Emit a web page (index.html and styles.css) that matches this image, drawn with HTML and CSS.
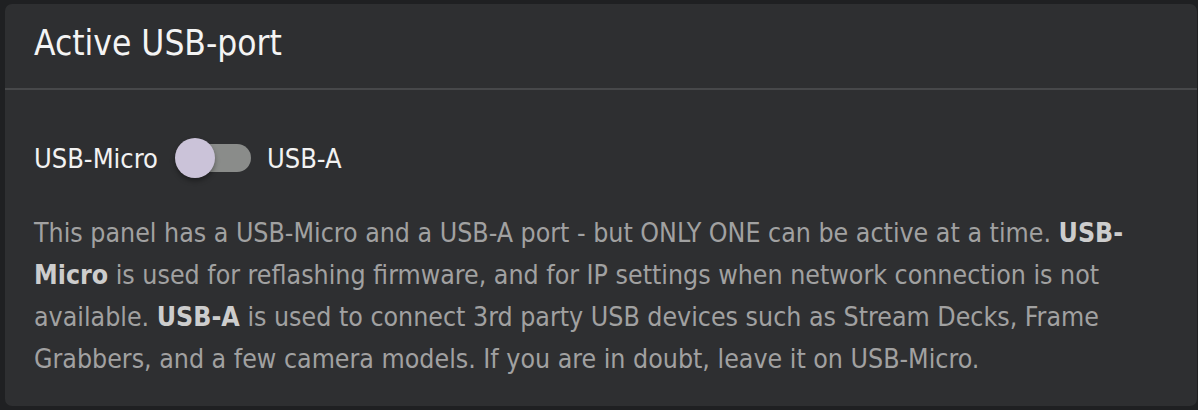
FILE: index.html
```html
<!DOCTYPE html>
<html>
<head>
<meta charset="utf-8">
<link rel="stylesheet" href="styles.css">
</head>
<body>
<section class="card">
  <header class="card-header">
    <h2 class="card-title">Active USB-port</h2>
  </header>
  <div class="card-body">
    <div class="switch-row">
      <span class="switch-label">USB-Micro</span>
      <span class="switch">
        <span class="switch-track"></span>
        <span class="switch-knob"></span>
      </span>
      <span class="switch-label">USB-A</span>
    </div>
    <p class="help">This panel has a USB-Micro and a USB-A port - but ONLY ONE can be active at a time. <strong>USB-Micro</strong> is used for reflashing firmware, and for IP settings when network connection is not available. <strong>USB-A</strong> is used to connect 3rd party USB devices such as Stream Decks, Frame Grabbers, and a few camera models. If you are in doubt, leave it on USB-Micro.</p>
  </div>
</section>
</body>
</html>
```

FILE: styles.css
```css
html, body {
  margin: 0;
  background: #1f2022;
}
body {
  padding: 4px 1px 4px 5px;
  font-family: "DejaVu Sans Condensed", "DejaVu Sans", sans-serif;
}
.card {
  background: #2e2f31;
  border-radius: 7px;
  height: 402px;
  box-sizing: border-box;
  overflow: hidden;
}
.card-header {
  height: 86px;
  box-sizing: border-box;
  padding: 0 0 6px 29px;
  border-bottom: 2px solid #47484a;
  display: flex;
  align-items: center;
}
.card-title {
  margin: 0;
  font-weight: normal;
  font-size: 35px;
  color: #f4f4f4;
}
.card-body {
  padding: 48px 29px 0;
}
.switch-row {
  display: flex;
  align-items: center;
  height: 40px;
}
.switch-label {
  font-size: 27px;
  color: #f2f2f2;
}
.switch {
  position: relative;
  width: 76px;
  height: 40px;
  margin: 0 16px 0 17px;
  display: flex;
  align-items: center;
}
.switch-track {
  margin-left: 6px;
  width: 70px;
  height: 28px;
  border-radius: 14px;
  background: #8a8c8a;
}
.switch-knob {
  position: absolute;
  left: 0;
  top: 0;
  width: 40px;
  height: 40px;
  border-radius: 50%;
  background: #cbc3d9;
  box-shadow: 0 3px 5px rgba(0,0,0,0.35);
}
.help {
  margin: 34px 0 0;
  font-size: 26.5px;
  line-height: 42px;
  color: #a1a1a1;
}
.help strong {
  font-weight: 600;
  color: #cdcdcd;
}
```
